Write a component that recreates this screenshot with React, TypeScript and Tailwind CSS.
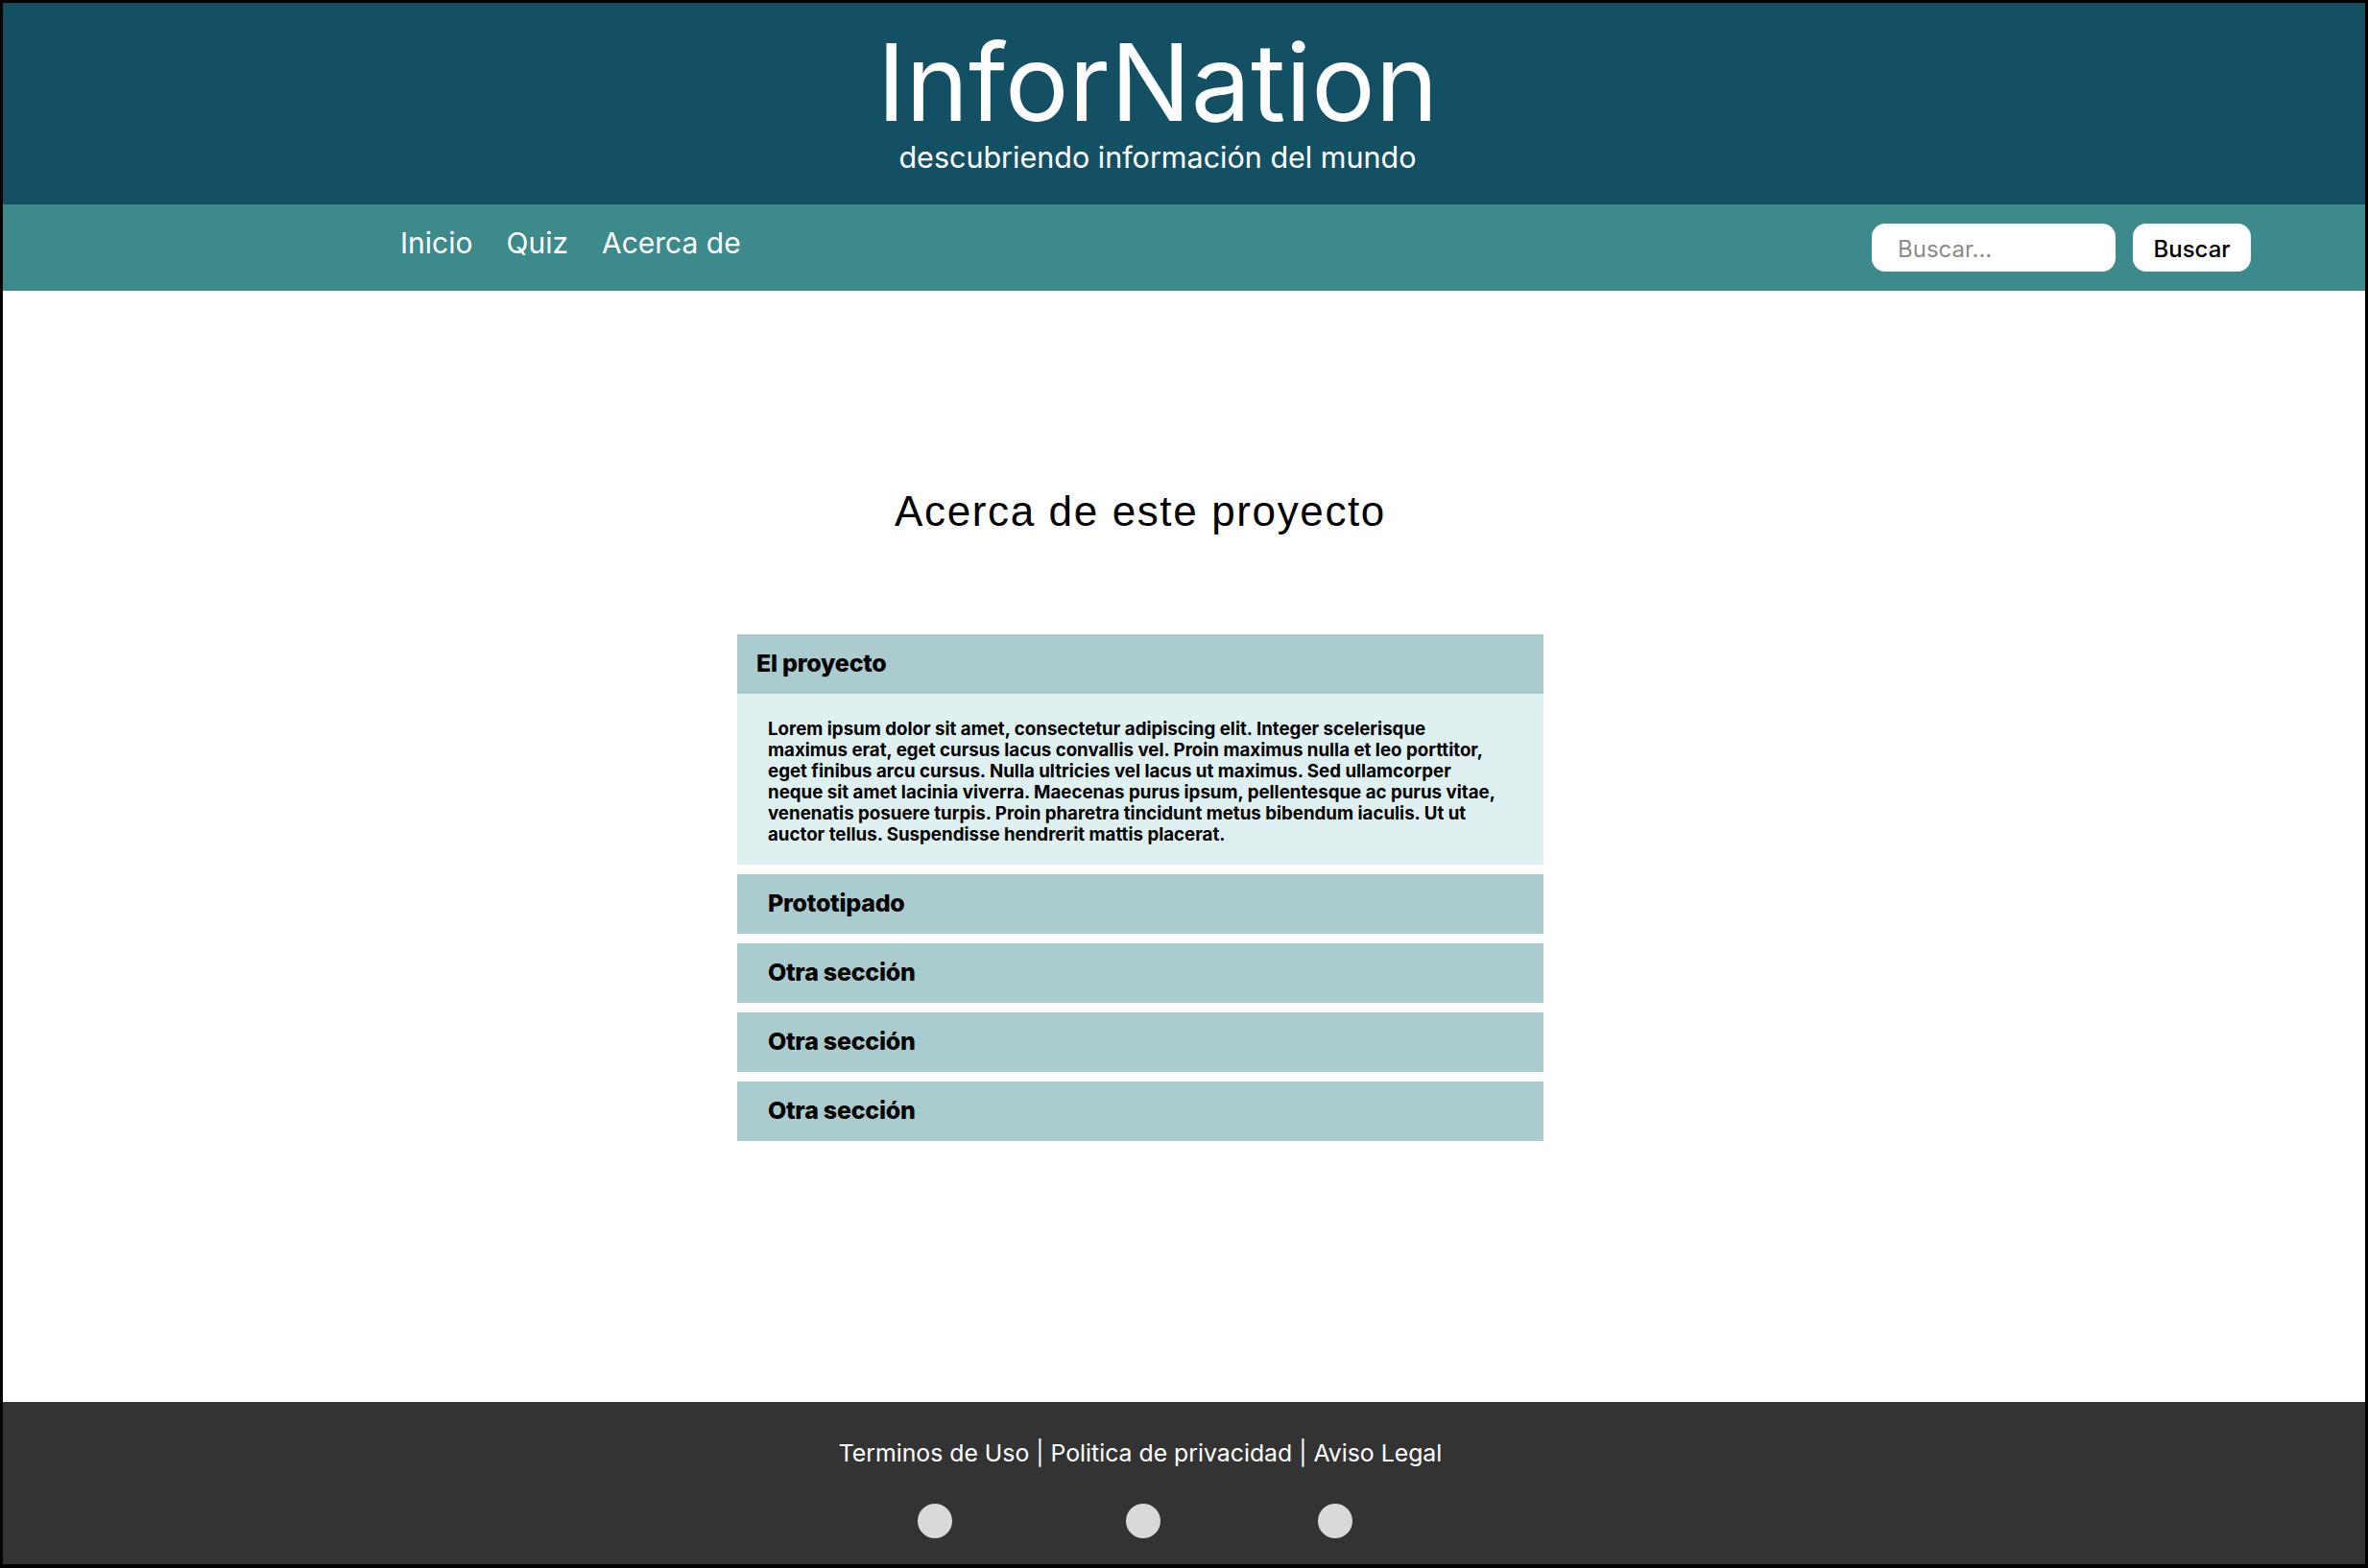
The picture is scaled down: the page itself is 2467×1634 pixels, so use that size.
import React from 'react';

const sections = ['Prototipado', 'Otra sección', 'Otra sección', 'Otra sección'];

const lorem = [
  'Lorem ipsum dolor sit amet, consectetur adipiscing elit. Integer scelerisque',
  'maximus erat, eget cursus lacus convallis vel. Proin maximus nulla et leo porttitor,',
  'eget finibus arcu cursus. Nulla ultricies vel lacus ut maximus. Sed ullamcorper',
  'neque sit amet lacinia viverra. Maecenas purus ipsum, pellentesque ac purus vitae,',
  'venenatis posuere turpis. Proin pharetra tincidunt metus bibendum iaculis. Ut ut',
  'auctor tellus. Suspendisse hendrerit mattis placerat.',
];

export default function App() {
  return (
    <div className="flex h-screen flex-col overflow-hidden border-[3px] border-b-4 border-black bg-white font-['Inter',sans-serif]">
      {/* header */}
      <header className="flex h-[210px] shrink-0 flex-col items-center bg-[#135064] pr-[55px] pt-[27px] text-white">
        <h1 className="text-[111px] font-normal leading-none">InforNation</h1>
        <p className="mt-[8px] text-[30.5px] leading-none">descubriendo información del mundo</p>
      </header>

      {/* nav */}
      <nav className="flex h-[90px] shrink-0 items-start justify-between bg-[#3d8a8c] pl-[414px] pr-[119px] pt-[20px]">
        <ul className="mt-[5px] flex gap-[35px] text-[30px] leading-none text-white">
          <li>Inicio</li>
          <li>Quiz</li>
          <li>Acerca de</li>
        </ul>
        <div className="flex gap-[18px]">
          <input
            placeholder="Buscar..."
            className="h-[50px] w-[254px] rounded-[14px] bg-white pl-[27px] pt-[3px] text-[24px] text-black outline-none placeholder:text-[#8c8c8c]"
          />
          <button className="h-[50px] w-[123px] rounded-[14px] bg-white pt-[3px] text-[24px] font-medium text-black">Buscar</button>
        </div>
      </nav>

      {/* main */}
      <main className="flex-1">
        <div className="ml-[765px] w-[840px]">
          <h2 className="mt-[208px] text-center font-['Liberation_Sans',Arial,sans-serif] text-[44px] leading-none tracking-[0.037em] text-black">
            Acerca de este proyecto
          </h2>
          <div className="mt-[106px] flex flex-col gap-[10px]">
            <div>
              <div className="flex h-[62px] items-center bg-[#abcccf] pl-[20px] text-[25px] font-extrabold tracking-[-0.01em] text-black">El proyecto</div>
              <div className="bg-[#dff0f0] pb-[20px] pl-[32px] pt-[26px] text-[18.7px] font-bold leading-[22px] text-black">
                {lorem.map((l, i) => (
                  <div key={i} className="whitespace-nowrap">{l}</div>
                ))}
              </div>
            </div>
            {sections.map((s, i) => (
              <div key={i} className="flex h-[62px] items-center bg-[#abcccf] pl-[32px] text-[25px] font-extrabold tracking-[-0.01em] text-black">
                {s}
              </div>
            ))}
          </div>
        </div>
      </main>

      {/* footer */}
      <footer className="h-[169px] shrink-0 bg-[#333333] pt-[41px]">
        <div className="ml-[765px] w-[840px] text-center text-[24.8px] leading-none text-white">
          Terminos de Uso | Politica de privacidad | Aviso Legal
        </div>
        <div className="mt-[40px] flex">
          <span className="ml-[953px] h-[36px] w-[36px] rounded-full bg-[#d9d9d9]" />
          <span className="ml-[181px] h-[36px] w-[36px] rounded-full bg-[#d9d9d9]" />
          <span className="ml-[164px] h-[36px] w-[36px] rounded-full bg-[#d9d9d9]" />
        </div>
      </footer>
    </div>
  );
}
